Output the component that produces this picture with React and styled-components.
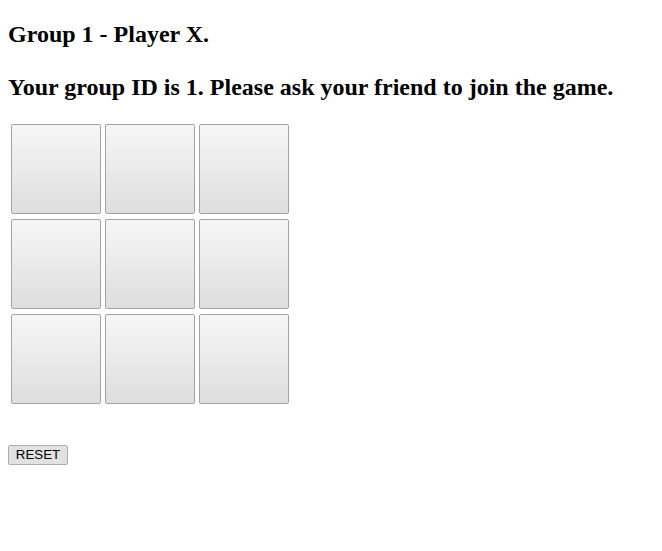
import styled, { createGlobalStyle } from "styled-components";

const Global = createGlobalStyle`
  body {
    margin: 8px;
    background: #fff;
    color: #000;
    font-family: "Liberation Serif", "Times New Roman", serif;
  }
`;

const Title = styled.h2`
  margin: ${(p) => p.$top || 20}px 0 ${(p) => p.$gap || 20}px;
  font-size: 24px;
  font-weight: bold;
  line-height: normal;
`;

const Board = styled.div`
  display: grid;
  grid-template-columns: repeat(3, 90px);
  grid-auto-rows: 90px;
  gap: 5px 4px;
  padding: 3px;
  width: max-content;
`;

const Cell = styled.button`
  box-sizing: border-box;
  width: 90px;
  height: 90px;
  padding: 0;
  border: 1px solid #a3a3a3;
  border-radius: 2px;
  background: linear-gradient(#f6f6f6, #dedede);
  font-family: "Liberation Sans", Arial, sans-serif;
  font-size: 40px;
  cursor: pointer;
`;

const ResetButton = styled.button`
  box-sizing: border-box;
  display: block;
  margin-top: 38px;
  width: 60px;
  height: 20px;
  padding: 0;
  border: 1px solid #adadad;
  border-radius: 2px;
  background: #e1e1e1;
  color: #000;
  font-family: "Liberation Sans", Arial, sans-serif;
  font-size: 13.33px;
  line-height: 18px;
  cursor: pointer;
`;

const App = () => {
  const cells = Array.from({ length: 9 }, (_, i) => i);
  return (
    <>
      <Global />
      <Title $top={13} $gap={26}>
        Group 1 - Player X.
      </Title>
      <Title>Your group ID is 1. Please ask your friend to join the game.</Title>
      <Board>
        {cells.map((i) => (
          <Cell key={i} aria-label={`cell ${i + 1}`} />
        ))}
      </Board>
      <ResetButton>RESET</ResetButton>
    </>
  );
};

export default App;
